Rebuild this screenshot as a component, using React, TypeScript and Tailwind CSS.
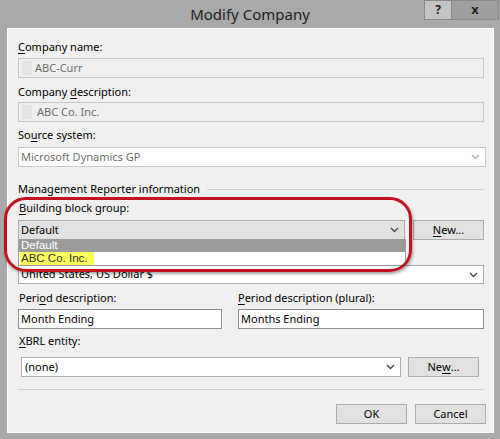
import React from 'react';

const font = { fontFamily: '"Noto Sans", "Liberation Sans", sans-serif' };

const Chevron = ({ color = '#555' }: { color?: string }) => (
    <svg width="9" height="6" viewBox="0 0 9 6" className="shrink-0">
        <path d="M1 1 L4.5 4.5 L8 1" fill="none" stroke={color} strokeWidth="1.3" />
    </svg>
);

const U = ({ children }: { children: React.ReactNode }) => <span className="underline underline-offset-2">{children}</span>;

const Label = ({ children, className = '' }: { children: React.ReactNode; className?: string }) => (
    <div className={`h-[14px] leading-[14px] text-[11px] text-black ${className}`}>{children}</div>
);

const Button = ({ children, className = '' }: { children: React.ReactNode; className?: string }) => (
    <div className={`h-[20px] flex items-center justify-center bg-[#e1e1e1] border border-[#adadad] text-[11px] text-black ${className}`}>
        {children}
    </div>
);

export default function App() {
    return (
        <div className="relative w-[500px] h-[439px] bg-[#a9a9a9] flex flex-col overflow-hidden" style={font}>
            {/* title bar */}
            <div className="relative h-[28px] shrink-0 flex items-center justify-center">
                <span className="text-[15px] text-[#222] leading-none">Modify Company</span>
                <div className="absolute top-0 right-[1px] flex">
                    <div className="w-[28px] h-[20px] bg-[#c4c4c4] border border-[#8a8a8a] flex items-center justify-center text-[12px] font-bold text-[#222]">?</div>
                    <div className="w-[47px] h-[20px] bg-[#9e9e9e] border border-l-0 border-[#8a8a8a] flex items-center justify-center text-[13px] font-bold text-[#222]">x</div>
                </div>
            </div>

            {/* content */}
            <div className="ml-[7px] mr-[6px] h-[405px] bg-[#f0f0f0] border border-white flex flex-col pl-[10px] pr-[9px]">
                <Label className="mt-[11px]"><U>C</U>ompany name:</Label>
                <div className="mt-[4px] h-[20px] bg-[#efefef] border border-[#c9c9c9] flex items-center text-[11px] text-[#6d6d6d]">
                    <span className="ml-[3px] w-[10px] h-[14px] bg-[#e4e4e4]" />
                    <span className="ml-[3px]">ABC-Curr</span>
                </div>

                <Label className="mt-[7px]">Company <U>d</U>escription:</Label>
                <div className="mt-[3px] h-[20px] bg-[#efefef] border border-[#c9c9c9] flex items-center text-[11px] text-[#6d6d6d]">
                    <span className="ml-[3px] w-[10px] h-[14px] bg-[#e4e4e4]" />
                    <span className="ml-[5px]">ABC Co. Inc.</span>
                </div>

                <Label className="mt-[6px]">So<U>u</U>rce system:</Label>
                <div className="mt-[5px] h-[20px] mr-[-2px] bg-white border border-[#cacaca] flex items-center justify-between pl-[2px] pr-[5px] text-[11px] text-[#6d6d6d]">
                    <span>Microsoft Dynamics GP</span>
                    <Chevron color="#b0b0b0" />
                </div>

                <div className="mt-[15px] h-[14px] flex items-center gap-[7px]">
                    <span className="text-[11px] leading-[14px] text-black">Management Reporter information</span>
                    <div className="flex-1 h-px bg-[#cfcfcf]" />
                </div>

                <Label className="mt-[5px] ml-[1px]"><U>B</U>uilding block group:</Label>
                <div className="relative mt-[5px] h-[20px] flex gap-[8px]">
                    <div className="w-[388px] h-[20px] bg-[#e2e2e2] border border-[#acacac] flex items-center justify-between pl-[2px] pr-[5px] text-[11px] text-black">
                        <span>Default</span>
                        <Chevron color="#444" />
                    </div>
                    <Button className="w-[71px]"><U>N</U>ew...</Button>

                    {/* open list */}
                    <div
                        className="absolute left-0 top-[19px] w-[388px] z-10 border border-[#9a9a9a] border-t-0 bg-white text-[11.5px]"
                        style={{ fontFamily: '"Liberation Sans", Arial, sans-serif' }}
                    >
                        <div className="h-[13px] leading-[13px] overflow-hidden bg-[#9b9b9b] text-white pl-[2px]">Default</div>
                        <div className="h-[13px] leading-[13px] overflow-hidden bg-white pl-[1px]">
                            <span className="inline-block h-[13px] bg-[#fbff5c] text-[#333] pl-[1px] pr-[7px]">ABC Co. Inc.</span>
                        </div>
                    </div>
                </div>

                {/* row hidden under the open list */}
                <div className="mt-[5px] h-[14px]" />
                <div className="mt-[6px] h-[19px] bg-white border border-[#acacac] flex items-center justify-between pl-[2px] pr-[5px] text-[11px] text-black">
                    <span>United States, US Dollar $</span>
                    <Chevron color="#444" />
                </div>

                <div className="mt-[7px] flex gap-[16px]">
                    <div className="w-[204px] flex flex-col">
                        <Label className="ml-[1px]">Peri<U>o</U>d description:</Label>
                        <div className="mt-[4px] h-[20px] bg-white border border-[#8f8f8f] flex items-center pl-[2px] text-[11px] text-black">Month Ending</div>
                    </div>
                    <div className="flex-1 flex flex-col">
                        <Label><U>P</U>eriod description (plural):</Label>
                        <div className="mt-[4px] h-[20px] bg-white border border-[#8f8f8f] flex items-center pl-[2px] text-[11px] text-black">Months Ending</div>
                    </div>
                </div>

                <Label className="mt-[5px] ml-[1px]"><U>X</U>BRL entity:</Label>
                <div className="mt-[9px] ml-[3px] h-[20px] flex gap-[7px]">
                    <div className="w-[380px] bg-white border border-[#acacac] flex items-center justify-between pl-[3px] pr-[5px] text-[11px] text-black">
                        <span>(none)</span>
                        <Chevron color="#444" />
                    </div>
                    <Button className="w-[71px]">Ne<U>w</U>...</Button>
                </div>

                <div className="mt-[12px] h-px bg-[#cfcfcf]" />

                <div className="mt-[14px] flex justify-end gap-[8px] mr-[-2px]">
                    <Button className="w-[71px]">OK</Button>
                    <Button className="w-[71px]">Cancel</Button>
                </div>
            </div>

            {/* red callout annotation */}
            <div className="absolute left-[4px] top-[197px] w-[408px] h-[75px] rounded-[22px] border-[3px] border-[#c3121f] shadow-[1px_2px_3px_rgba(0,0,0,0.35)] pointer-events-none z-20" />
        </div>
    );
}
